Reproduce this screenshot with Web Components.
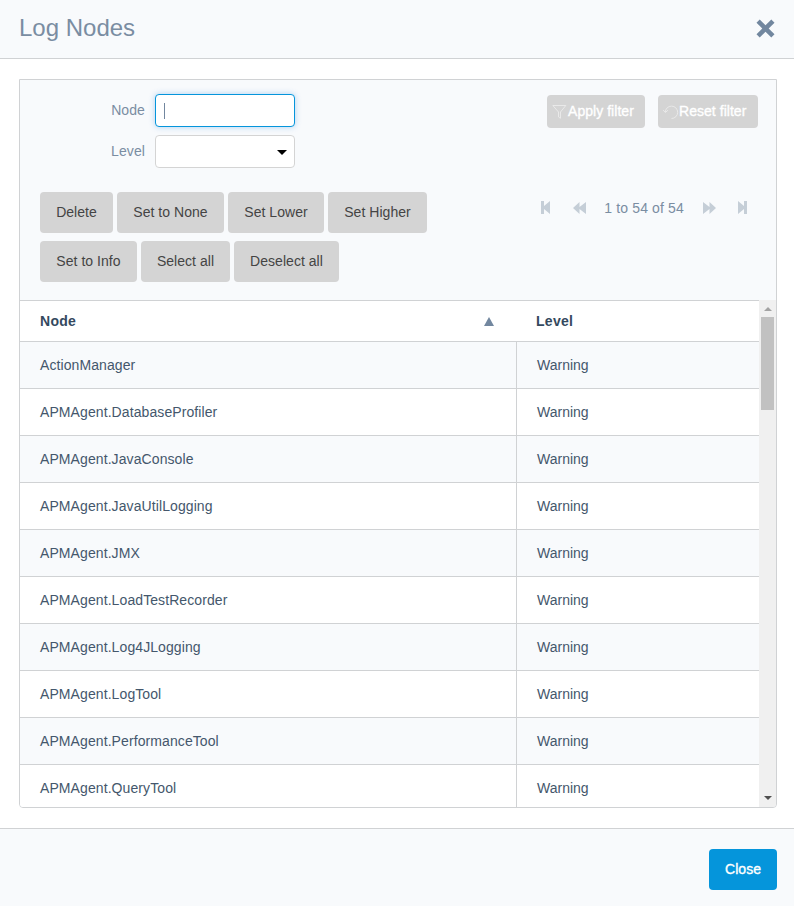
<!DOCTYPE html>
<html lang="en">
<head>
<meta charset="utf-8">
<title>Log Nodes</title>
<style>
html,body{margin:0;height:100%;background:#fff;overflow:hidden}
body{font:14px/20px "Liberation Sans",Arial,sans-serif;color:#7a8da2}
</style>
</head>
<body>
<log-dialog></log-dialog>
<script>
const define = (name, html, setup) => customElements.define(name, class extends HTMLElement {
  constructor() {
    super();
    this.attachShadow({mode: 'open'}).innerHTML = '<style>*{box-sizing:border-box}:host{box-sizing:border-box}</style>' + html;
  }
  connectedCallback() { if (setup) setup(this, this.shadowRoot); }
});

define('ui-button', `<style>
:host{display:flex;align-items:center;justify-content:center;height:41px;padding:0 0 1px;width:var(--w);border-radius:4px;background:#d4d4d4;color:#444;white-space:nowrap;letter-spacing:.04px}
:host([kind=primary]){background:#0595db;color:#fff;-webkit-text-stroke:.35px #fff}
:host([kind=filter]){height:33px;color:#fff;justify-content:flex-start;padding:0 0 1px 5px;-webkit-text-stroke:.35px #fff}
:host([kind=filter]) ::slotted(ui-icon){margin-top:1px}
</style><slot></slot>`, h => h.style.setProperty('--w', h.getAttribute('width') + 'px'));

const icons = {
  close: [20, 20, '<path transform="translate(.5 .5)" d="M4.2 1 10 6.8 15.8 1 19 4.2 13.2 10 19 15.8 15.8 19 10 13.2 4.2 19 1 15.8 6.8 10 1 4.2Z" fill="#72879f"/>'],
  filter: [16, 16, '<path d="M.8 1.5h13L8.5 8v6.3l-2-1.3V8Z" fill="none" stroke="#ebebeb" stroke-width=".9"/>'],
  reset: [16, 16, '<path d="M2.3 8.2A6.2 6.2 0 1 1 8.5 14.5M0 5.8 2.3 8.5 5 6.2" fill="none" stroke="#ebebeb" stroke-width=".9"/>'],
  first: [9, 13, '<path d="M0 0h3v5l6-5v13L3 8v5H0Z" fill="#c5ced7"/>'],
  prev: [13, 12, '<path d="M0 6 6.5 0v5L13 0v12L6.5 7v5Z" fill="#c5ced7"/>'],
  next: [13, 12, '<path d="M13 6 6.5 0v5L0 0v12l6.5-5v5Z" fill="#c5ced7"/>'],
  last: [9, 13, '<path d="M9 0H6v5L0 0v13l6-5v5h3Z" fill="#c5ced7"/>'],
  sort: [10, 9, '<path d="M5 0 10 9H0Z" fill="#72879f"/>'],
  drop: [10, 5, '<path d="M0 0h10L5 5Z" fill="#000"/>'],
  up: [8, 4, '<path d="M4 0 8 4H0Z" fill="#a3a3a3"/>'],
  down: [8, 4, '<path d="M0 0h8L4 4Z" fill="#505050"/>']
};
define('ui-icon', `<style>:host{display:block;flex:none}svg{display:block}</style><span></span>`, (h, r) => {
  const [w, y, p] = icons[h.getAttribute('name')];
  r.querySelector('span').innerHTML = `<svg width="${w}" height="${y}" viewBox="0 0 ${w} ${y}">${p}</svg>`;
});

define('form-field', `<style>
:host{display:flex;height:33px}
label{width:125px;text-align:right;padding:6px 0;margin-right:10px;letter-spacing:.1px}
div{width:140px;height:33px;border:1px solid #d4d4d4;border-radius:4px;background:#fff;display:flex;align-items:center;padding:0 7px 0 8px}
:host([focused]) div{border-color:#0595db;box-shadow:0 0 6px rgba(5,120,220,.3)}
i{display:none;width:1px;height:16px;background:#72879f}
:host([focused]) i{display:block}
::slotted(ui-icon){margin:2px 0 0 auto}
</style><label></label><div><i></i><slot></slot></div>`, (h, r) => r.querySelector('label').textContent = h.getAttribute('label'));

define('page-nav', `<style>
:host{display:flex;align-items:center;height:20px;margin-left:auto}
.a{margin-right:23px}.n{margin:0 19px 0 18px;letter-spacing:.15px}.l{margin-left:22px}
ui-icon{position:relative;top:-.5px}
</style><ui-icon class="a" name="first"></ui-icon><ui-icon name="prev"></ui-icon><span class="n">1 to 54 of 54</span><ui-icon name="next"></ui-icon><ui-icon class="l" name="last"></ui-icon>`);

define('log-row', `<style>
:host{display:grid;grid-template-columns:496px 1fr;height:47px;border-bottom:1px solid #d0d2d4;background:#fff;color:#44576c}
:host([odd]){background:#f8fafc}
span{padding:13px 20px;letter-spacing:.09px}
span+span{border-left:1px solid #d0d2d4;letter-spacing:0}
</style><span><slot></slot></span><span><slot name="level"></slot></span>`);

define('scroll-track', `<style>
:host{display:flex;flex-direction:column;align-items:center;justify-content:space-between;width:17px;background:#f0f0f0;padding:7px 0}
b{width:13px;height:93px;background:#c1c1c1;margin:6px 0 auto}
</style><ui-icon name="up"></ui-icon><b></b><ui-icon name="down"></ui-icon>`);

define('log-table', `<style>
:host{display:grid;grid-template-columns:1fr 17px;flex:1;min-height:0;overflow:hidden}
.t{overflow:hidden}
.h{display:grid;grid-template-columns:496px 1fr;height:42px;border-top:1px solid #d0d2d4;border-bottom:1px solid #d0d2d4;background:#fff;color:#34495e;font-weight:bold;letter-spacing:.3px}
.h div{display:flex;align-items:center;justify-content:space-between;padding:0 22px 0 20px}
.h div+div{padding-left:20px}
</style><div class="t"><div class="h"><div>Node<ui-icon name="sort"></ui-icon></div><div>Level</div></div><section></section></div><scroll-track></scroll-track>`, (h, r) => {
  r.querySelector('section').innerHTML = ['ActionManager','APMAgent.DatabaseProfiler','APMAgent.JavaConsole','APMAgent.JavaUtilLogging','APMAgent.JMX','APMAgent.LoadTestRecorder','APMAgent.Log4JLogging','APMAgent.LogTool','APMAgent.PerformanceTool','APMAgent.QueryTool']
    .map((n, i) => `<log-row${i % 2 ? '' : ' odd'}>${n}<span slot="level">Warning</span></log-row>`).join('');
});

define('log-dialog', `<style>
:host{display:flex;flex-direction:column;height:906px}
header{height:59px;background:#f8fafc;border-bottom:1px solid #d0d2d4;display:flex;justify-content:space-between;padding:13px 19px 0}
h1{margin:0;font:24px/30px "Liberation Sans",Arial,sans-serif}
header ui-icon{margin:5px 0 0}
main{flex:1;padding:20px 17px 20px 19px;display:flex;min-height:0}
.panel{flex:1;display:flex;flex-direction:column;border:1px solid #d0d2d4;border-radius:0 0 4px 4px;background:#f8fafc;overflow:hidden}
.top{display:flex;justify-content:space-between;padding:14px 18px 0 0}
.fields{display:grid;gap:8px}
.filters{display:flex;gap:13px;padding-top:1px}
.bar{display:flex;align-items:flex-start;padding:24px 29px 18px 20px}
.buttons{display:flex;flex-wrap:wrap;gap:8px 4px;width:400px}
page-nav{margin-top:6px}
footer{height:78px;background:#f8fafc;border-top:1px solid #d0d2d4;display:flex;justify-content:flex-end;padding:20px 17px}
</style>
<header><h1>Log Nodes</h1><ui-icon name="close"></ui-icon></header>
<main><div class="panel">
<div class="top"><div class="fields"><form-field label="Node" focused></form-field><form-field label="Level"><ui-icon name="drop"></ui-icon></form-field></div>
<div class="filters"><ui-button kind="filter" width="98"><ui-icon name="filter"></ui-icon>Apply filter</ui-button><ui-button kind="filter" width="100"><ui-icon name="reset"></ui-icon>Reset filter</ui-button></div></div>
<div class="bar"><div class="buttons"><ui-button width="73">Delete</ui-button><ui-button width="107">Set to None</ui-button><ui-button width="96">Set Lower</ui-button><ui-button width="99">Set Higher</ui-button><ui-button width="97">Set to Info</ui-button><ui-button width="89">Select all</ui-button><ui-button width="105">Deselect all</ui-button></div><page-nav></page-nav></div>
<log-table></log-table>
</div></main>
<footer><ui-button kind="primary" width="68">Close</ui-button></footer>`);
</script>
</body>
</html>
